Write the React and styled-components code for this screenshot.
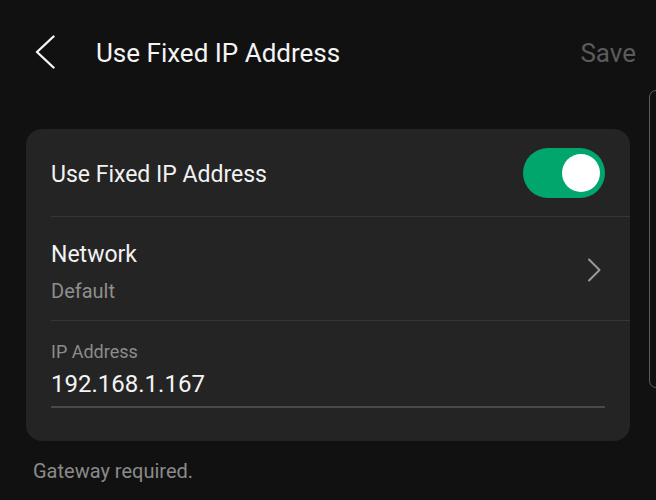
import React from "react";
import styled, { createGlobalStyle } from "styled-components";

const GlobalStyle = createGlobalStyle`
  html, body {
    margin: 0;
    background: #111111;
  }
  body {
    font-family: Roboto, "Noto Sans", sans-serif;
    color: #f2f2f2;
  }
`;

const Screen = styled.div`
  position: relative;
  width: 656px;
  height: 500px;
  overflow: hidden;
  background: #111111;
`;

const TopBar = styled.header`
  display: flex;
  align-items: center;
  height: 106px;
  padding: 0 20px 0 33px;
  box-sizing: border-box;
`;

const BackButton = styled.button`
  display: flex;
  align-items: center;
  justify-content: center;
  width: 24px;
  height: 34px;
  padding: 0;
  border: 0;
  background: none;
  margin: 0 39px 2px 0;
`;

const Title = styled.h1`
  flex: 1;
  margin: 0;
  font-size: 26px;
  line-height: 30px;
  font-weight: 400;
  color: #f4f4f4;
`;

const SaveButton = styled.span`
  font-size: 26px;
  line-height: 30px;
  color: #5b5b5b;
`;

const Card = styled.section`
  margin: 23px 26px 0;
  background: #242424;
  border-radius: 16px;
  padding-bottom: 33px;
`;

const Row = styled.div`
  display: flex;
  align-items: center;
  justify-content: space-between;
  box-sizing: border-box;
  height: ${(p) => p.h}px;
  margin-left: 25px;
  padding: ${(p) => p.pt || 0}px 25px 0 0;
  border-bottom: 1px solid #363636;
`;

const Label = styled.div`
  font-size: 23px;
  line-height: 28px;
  margin-top: ${(p) => p.shift || 0}px;
  color: #f2f2f2;
`;

const Stack = styled.div`
  display: flex;
  flex-direction: column;
  gap: 10px;
`;

const Sub = styled.div`
  font-size: 20px;
  line-height: 24px;
  color: #8e8e8e;
`;

const Toggle = styled.div`
  display: flex;
  align-items: center;
  justify-content: flex-end;
  width: 82px;
  height: 50px;
  box-sizing: border-box;
  padding: 0 5px;
  border-radius: 25px;
  background: #00a66c;
`;

const Knob = styled.div`
  width: 38px;
  height: 38px;
  border-radius: 50%;
  background: #ffffff;
`;

const ChevronSlot = styled.div`
  display: flex;
  margin: 0 4px 4px 0;
`;

const Field = styled.div`
  margin: 0 25px;
  padding-top: 20px;
`;

const FieldLabel = styled.div`
  font-size: 18px;
  line-height: 22px;
  color: #8c8c8c;
`;

const FieldValue = styled.div`
  font-size: 24px;
  line-height: 28px;
  color: #f4f4f4;
  padding: 7px 0 8px;
  border-bottom: 2px solid #4a4a4a;
`;

const Hint = styled.p`
  margin: 18px 0 0 33px;
  font-size: 20px;
  line-height: 24px;
  color: #8a8a8a;
`;

const ScrollIndicator = styled.div`
  position: absolute;
  left: 649px;
  top: 90px;
  width: 14px;
  height: 298px;
  box-sizing: border-box;
  border: 1.5px solid #5c5c5c;
  border-radius: 7px;
`;

const BackArrow = () => (
  <svg width="20" height="34" viewBox="0 0 20 34" fill="none">
    <path
      d="M18.5 1.5 L2 17 L18.5 32.5"
      stroke="#f5f5f5"
      strokeWidth="2.4"
      strokeLinecap="round"
      strokeLinejoin="round"
    />
  </svg>
);

const ForwardArrow = () => (
  <svg width="14" height="24" viewBox="0 0 14 24" fill="none">
    <path
      d="M2 1.5 L12.5 12 L2 22.5"
      stroke="#9a9a9a"
      strokeWidth="2"
      strokeLinecap="round"
      strokeLinejoin="round"
    />
  </svg>
);

export default function App() {
  return (
    <Screen>
      <GlobalStyle />
      <TopBar>
        <BackButton aria-label="Back">
          <BackArrow />
        </BackButton>
        <Title>Use Fixed IP Address</Title>
        <SaveButton>Save</SaveButton>
      </TopBar>

      <Card>
        <Row h={88} pt={1}>
          <Label shift={4}>Use Fixed IP Address</Label>
          <Toggle>
            <Knob />
          </Toggle>
        </Row>
        <Row h={104} pt={7}>
          <Stack>
            <Label>Network</Label>
            <Sub>Default</Sub>
          </Stack>
          <ChevronSlot>
            <ForwardArrow />
          </ChevronSlot>
        </Row>
        <Field>
          <FieldLabel>IP Address</FieldLabel>
          <FieldValue>192.168.1.167</FieldValue>
        </Field>
      </Card>

      <Hint>Gateway required.</Hint>
      <ScrollIndicator />
    </Screen>
  );
}
